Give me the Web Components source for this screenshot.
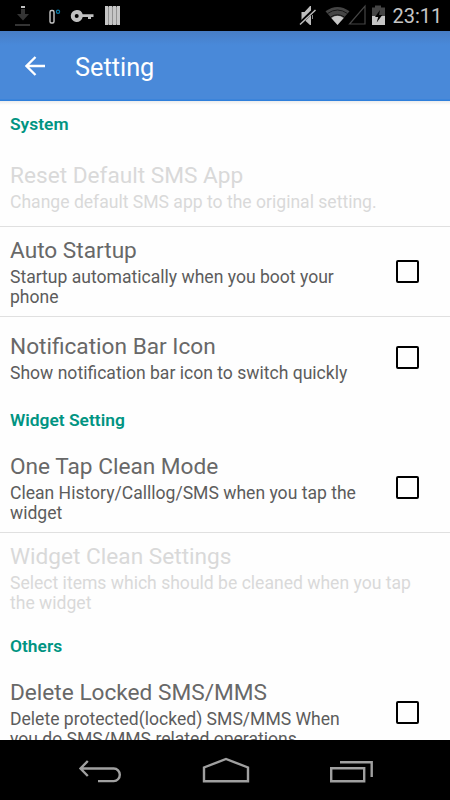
<!DOCTYPE html>
<html lang="en">
<head>
<meta charset="utf-8">
<title>Setting</title>
<style>
html,body{margin:0;height:100%;background:#fff;overflow:hidden}
body{font-family:Roboto,"Liberation Sans",sans-serif}
</style>
</head>
<body>
<settings-screen></settings-screen>
<script>
const define = (name, html) => customElements.define(name, class extends HTMLElement {
  constructor() {
    super();
    this.attachShadow({ mode: 'open' }).innerHTML = html;
  }
});

define('status-bar', `<style>
:host{display:flex;height:31px;background:#000;color:#c6c6c6;box-sizing:border-box}
svg{display:block;width:390px;height:31px;flex:none}
span{font-size:20px;line-height:33px;margin-left:2.500px}
</style>
<svg viewBox="0 0 390 31">
<path d="M21 6h4v2h-4z" fill="#c0c0c0"/>
<path d="M21 9h4v5h4l-6 6.500-6-6.500h4zM15 24h15v2H15z" fill="#343434"/>
<rect x="50" y="10.500" width="4" height="12.500" rx="1.500" fill="none" stroke="#c6c6c6" stroke-width="1.400"/>
<circle cx="58" cy="11.700" r="1.600" fill="none" stroke="#087aa8" stroke-width="1.200"/>
<path fill="#c0c0c0" fill-rule="evenodd" d="M77 10a6 6 0 0 1 5.700 4.300H93.500V17H91v2h-3v-2h-5.300A6 6 0 1 1 77 10zM76.700 14a2 2 0 1 0 0 4 2 2 0 0 0 0-4z"/>
<path d="M105 6.500h14.700v18.200H105z" fill="#929292"/>
<path d="M105 6h3v19h-3zM109 6h3v19h-3zM113 6h3v19h-3zM117 6h3v19h-3z" fill="#c6c6c6"/>
<path d="M301.500 12h3l5.500-6h1v19h-1l-5.500-5h-3z" fill="#bdbdbd"/>
<path d="M299 24.500L315 9" stroke="#000" stroke-width="3.500"/>
<path d="M300 24.500L315.500 10" stroke="#bdbdbd" stroke-width="1.500"/>
<path d="M312.500 15v4" stroke="#888" stroke-width="1"/>
<path d="M325.500 11.200q12-8.600 24 0L337.500 25z" fill="#454545"/>
<path d="M331.300 18q6.200-4.500 12.400 0L337.500 25z" fill="#c6c6c6"/>
<path d="M327.500 13.500q10-7 20 0M330.500 17q7-4.500 14 0" fill="none" stroke="#161616" stroke-width="1"/>
<path d="M349.500 24H365V6z" fill="none" stroke="#454545" stroke-width="1.200"/>
<path d="M372 7.500h3V5.500h6v2h4V16h-13z" fill="#454545"/><path d="M372 16h13v9h-13z" fill="#c6c6c6"/>
<path d="M380 10l-5 7h3.200l-1.500 5.500 5.600-7.500H379z" fill="#000"/>
</svg><span>23:11</span>`);

define('app-bar', `<style>
:host{display:flex;align-items:center;height:70px;box-sizing:border-box;padding:0 0 0 25px;color:#fff;
background:linear-gradient(#477dc4,#4989d9 14px,#4989d9 68px,#2f7fdb 69px);font-size:25.300px}
svg{width:21px;height:20px;margin-right:29px}
h1{font:inherit;margin:0;padding-top:3px}
</style>
<svg viewBox="0 0 21 20"><path d="M20 10H2M10.500 1L1.500 10l9 9" fill="none" stroke="#fff" stroke-width="2.300"/></svg>
<h1><slot></slot></h1>`);

define('section-title', `<style>
:host{display:block;height:46px;box-sizing:border-box;padding:12.500px 0 0 10px;color:#009482;font-size:17.400px;line-height:20px;font-weight:600}
</style><slot></slot>`);

define('check-box', `<style>
:host{display:block;width:23px;height:23px;box-sizing:border-box;border:2px solid #000;border-radius:2px}
</style>`);

define('setting-row', `<style>
:host{display:flex;flex:none;height:90px;box-sizing:border-box;color:#686868;padding:0 31px 0 10px;align-items:center}
:host([short]){height:80px}
:host([line]){border-bottom:1px solid #e0e0e0}
:host([disabled]){color:#d9d9d9;--summary:#d9d9d9}
div{flex:1;min-width:0;align-self:flex-start;padding-top:10.500px}
:host([short]) div{padding-top:var(--text-top,16.500px)}
h2{margin:0 0 3.500px;font-size:22.650px;line-height:26px;font-weight:400;white-space:nowrap}
p{margin:0;font-size:17.570px;line-height:20.400px;color:var(--summary,#5c5c5c);white-space:nowrap}
</style><div><h2><slot name="title"></slot></h2><p><slot></slot></p></div><slot name="control"></slot>`);

define('nav-bar', `<style>
:host{display:flex;justify-content:space-between;align-items:center;height:60px;background:#000;box-sizing:border-box;padding:0 76px 0 77px}
svg{display:block;height:30px;fill:none;stroke:#a0a0a0;stroke-width:2.400}
</style>
<svg width="44" height="30" viewBox="0 0 44 30"><path d="M3.500 13.500h33.300a6 6.300 0 0 1 0 12.600H21M10.800 6L3.500 13.500l7.300 7.500"/></svg>
<svg width="48" height="30" viewBox="0 0 48 30"><path d="M2 26.300V12.500L24 4l22 8.500v13.800z"/></svg>
<svg width="44" height="30" viewBox="0 0 44 30"><path d="M1.200 13.200h33v13.100h-33zM10 7.200h31.700V22"/></svg>`);

define('settings-screen', `<style>
:host{display:flex;flex-direction:column;width:450px;height:800px;overflow:hidden;background:#fff}
main{flex:1;min-height:0;overflow:hidden;display:flex;flex-direction:column;background:linear-gradient(#ececec,#fefefe 4px)}
section-title{flex:none}
.first{--text-top:15.500px}
.last{height:87px}
</style>
<status-bar></status-bar>
<app-bar>Setting</app-bar>
<main>
<section-title>System</section-title>
<setting-row class="first" short line disabled><span slot="title">Reset Default SMS App</span>Change default SMS app to the original setting.</setting-row>
<setting-row line><span slot="title">Auto Startup</span>Startup automatically when you boot your<br>phone<check-box slot="control"></check-box></setting-row>
<setting-row short><span slot="title">Notification Bar Icon</span>Show notification bar icon to switch quickly<check-box slot="control"></check-box></setting-row>
<section-title>Widget Setting</section-title>
<setting-row line><span slot="title">One Tap Clean Mode</span>Clean History/Calllog/SMS when you tap the<br>widget<check-box slot="control"></check-box></setting-row>
<setting-row disabled><span slot="title">Widget Clean Settings</span>Select items which should be cleaned when you tap<br>the widget</setting-row>
<section-title>Others</section-title>
<setting-row class="last"><span slot="title">Delete Locked SMS/MMS</span>Delete protected(locked) SMS/MMS When<br>you do SMS/MMS related operations<check-box slot="control"></check-box></setting-row>
</main>
<nav-bar></nav-bar>`);
</script>
</body>
</html>
